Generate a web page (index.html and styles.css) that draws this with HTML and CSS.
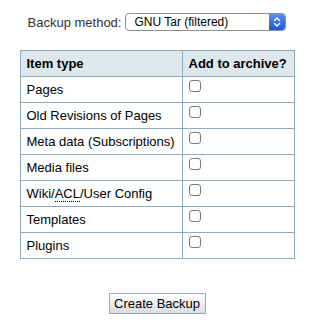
FILE: index.html
```html
<!DOCTYPE html>
<html lang="en">
<head>
  <meta charset="UTF-8" />
  <title>Backup</title>
  <link rel="stylesheet" href="styles.css">
</head>
<body>
  <form class="backup">
    <!-- Backup method -->
    <div class="method">
      <label for="method">Backup method:</label>
      <div class="select">
        <span class="select-value">GNU Tar (filtered)</span>
        <span class="select-arrows">
          <svg width="8" height="12" viewBox="0 0 8 12">
            <path d="M1.5 4.5 L4 2 L6.5 4.5 M1.5 7.5 L4 10 L6.5 7.5" fill="none" stroke="#fff" stroke-width="1.4" stroke-linecap="round" stroke-linejoin="round"/>
          </svg>
        </span>
      </div>
    </div>

    <!-- Items -->
    <table class="items">
      <tr>
        <th>Item type</th>
        <th>Add to archive?</th>
      </tr>
      <tr><td>Pages</td><td><input type="checkbox"></td></tr>
      <tr><td>Old Revisions of Pages</td><td><input type="checkbox"></td></tr>
      <tr><td>Meta data (Subscriptions)</td><td><input type="checkbox"></td></tr>
      <tr><td>Media files</td><td><input type="checkbox"></td></tr>
      <tr><td>Wiki/<abbr title="Access Control List">ACL</abbr>/User Config</td><td><input type="checkbox"></td></tr>
      <tr><td>Templates</td><td><input type="checkbox"></td></tr>
      <tr><td>Plugins</td><td><input type="checkbox"></td></tr>
    </table>

    <button type="button" class="create">Create Backup</button>
  </form>
</body>
</html>
```

FILE: styles.css
```css
body {
  margin: 0;
  font-family: "Liberation Sans", Arial, sans-serif;
  font-size: 13px;
  color: #000;
  background: #fff;
}

.backup {
  display: flex;
  flex-direction: column;
  align-items: center;
  padding-top: 13px;
}

.method {
  display: flex;
  align-items: center;
  gap: 4px;
}

.method label {
  color: #333;
}

.select {
  display: flex;
  align-items: center;
  width: 161px;
  height: 18px;
  box-sizing: border-box;
  border: 1px solid #8f8f8f;
  border-radius: 4px;
  overflow: hidden;
  background: #fff;
}

.select-value {
  flex: 1;
  padding-left: 8px;
  font-size: 12px;
  line-height: 16px;
}

.select-arrows {
  display: flex;
  align-items: center;
  justify-content: center;
  width: 16px;
  height: 100%;
  background: linear-gradient(#5d8ef2, #1e5bd6);
}

table.items {
  margin-top: 19px;
  width: 275px;
  border-collapse: collapse;
}

.items th,
.items td {
  border: 1px solid #8cacbb;
  padding: 4px 6px;
  line-height: 17px;
  text-align: left;
  vertical-align: top;
  color: #333;
}

.items th {
  background-color: #dee7ec;
  font-weight: bold;
  color: #000;
}

.items td:first-child {
  color: #000;
  width: 149px;
}

.items abbr {
  text-decoration: none;
  border-bottom: 1px dotted #000;
}

.items input[type="checkbox"] {
  appearance: none;
  display: block;
  width: 12px;
  height: 12px;
  margin: -1px 0 0 0;
  border: 1px solid #7a7a7a;
  border-radius: 3px;
  background: #fff;
}

button.create {
  margin-top: 34px;
  width: 97px;
  height: 21px;
  padding: 0;
  font-family: "Liberation Sans", Arial, sans-serif;
  font-size: 13px;
  color: #000;
  border: 1px solid #8cacbb;
  background: linear-gradient(#ffffff, #dcdcdc);
}
```
